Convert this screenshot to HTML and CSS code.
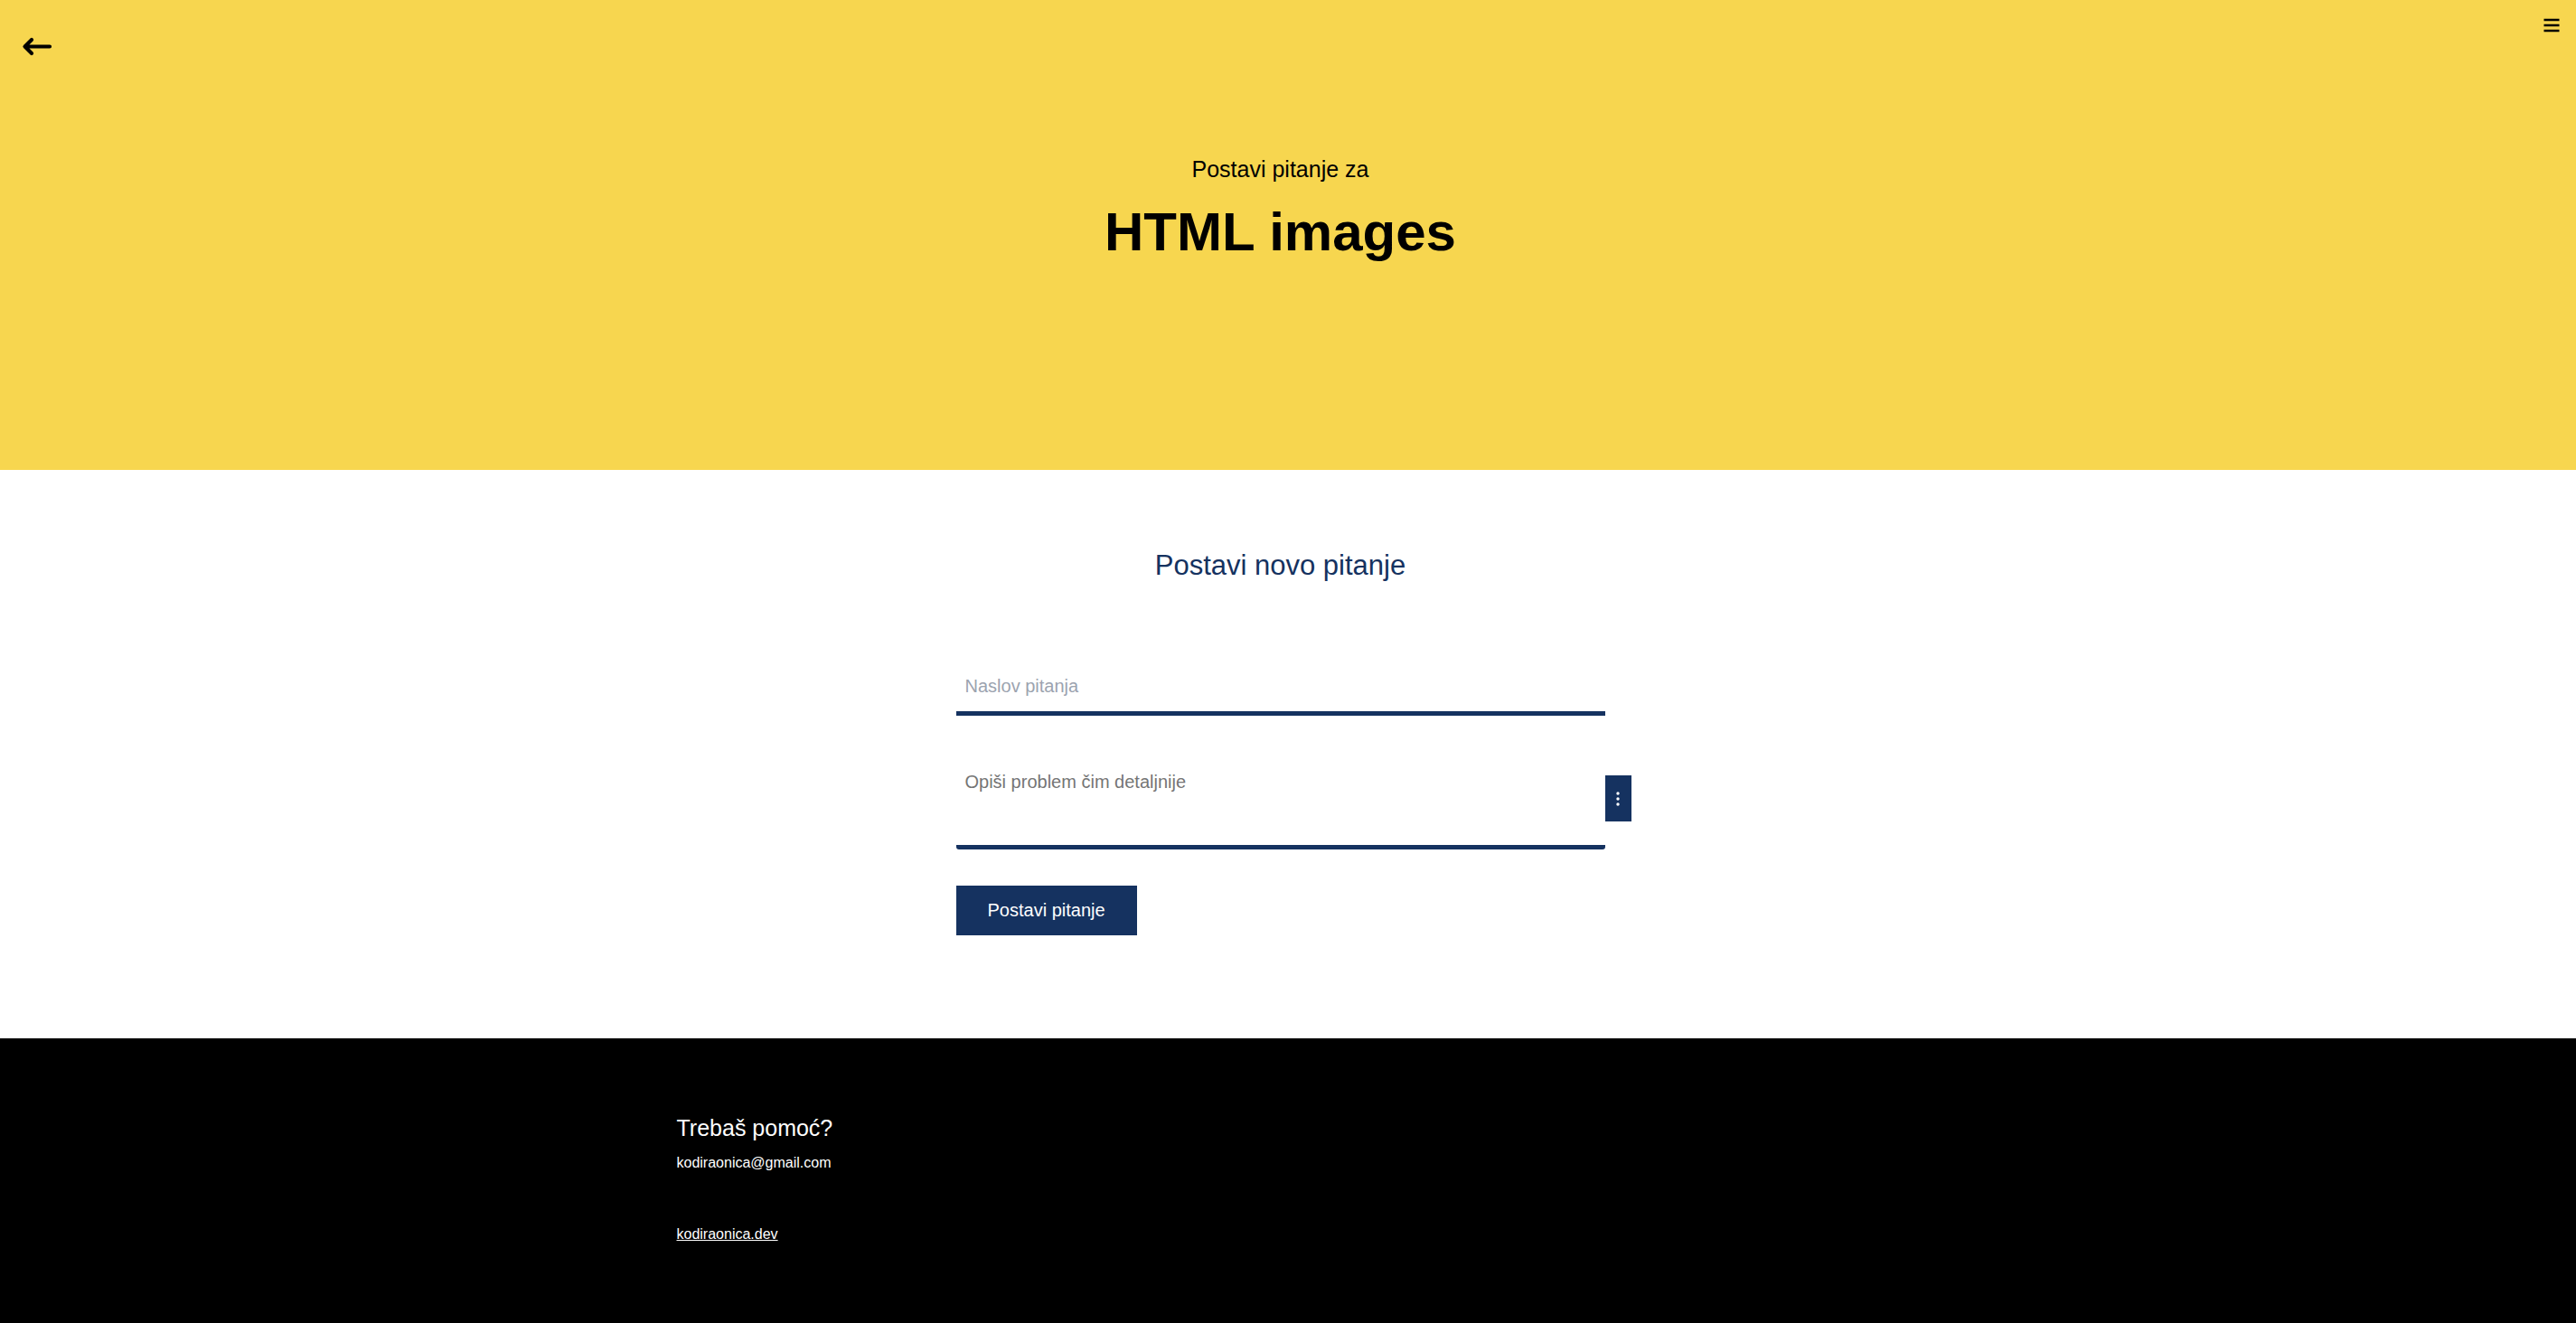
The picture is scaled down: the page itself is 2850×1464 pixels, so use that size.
FILE: index.html
```html
<!DOCTYPE html>
<html lang="hr">
<head>
<meta charset="utf-8">
<title>Postavi pitanje</title>
<link rel="stylesheet" href="styles.css">
</head>
<body>
<header class="hero">
  <a class="back" href="#" aria-label="Natrag">
    <svg width="34" height="24" viewBox="0 0 34 24"><path d="M31 10.5 H4 M11 3 L3.5 10.5 L11 18" fill="none" stroke="#000" stroke-width="4.2" stroke-linecap="round" stroke-linejoin="round"/></svg>
  </a>
  <button class="menu" aria-label="Izbornik">
    <svg width="18" height="16" viewBox="0 0 18 16"><path d="M0.5 2 H17.5 M0.5 8 H17.5 M0.5 14 H17.5" fill="none" stroke="#000" stroke-width="2.6"/></svg>
  </button>
  <p class="hero-sub">Postavi pitanje za</p>
  <h1 class="hero-title">HTML images</h1>
</header>

<main class="ask">
  <h2 class="ask-title">Postavi novo pitanje</h2>
  <form class="ask-form">
    <input class="field-title" type="text" placeholder="Naslov pitanja">
    <div class="area-row">
      <textarea class="field-body" placeholder="Opiši problem čim detaljnije"></textarea>
      <button type="button" class="more" aria-label="Više">
        <svg width="6" height="18" viewBox="0 0 6 18"><circle cx="3" cy="3" r="1.7" fill="#fff"/><circle cx="3" cy="9" r="1.7" fill="#fff"/><circle cx="3" cy="15" r="1.7" fill="#fff"/></svg>
      </button>
    </div>
    <button type="submit" class="submit">Postavi pitanje</button>
  </form>
</main>

<footer class="footer">
  <div class="footer-inner">
    <h3 class="footer-title">Trebaš pomoć?</h3>
    <p class="footer-mail">kodiraonica@gmail.com</p>
    <a class="footer-link" href="#">kodiraonica.dev</a>
  </div>
</footer>
</body>
</html>
```

FILE: styles.css
```css
* { box-sizing: border-box; }

html, body {
  margin: 0;
  padding: 0;
}

body {
  font-family: "Liberation Sans", Arial, Helvetica, sans-serif;
  color: #000;
  background: #fff;
}

.hero {
  position: relative;
  height: 520px;
  background: #f7d64f;
  padding: 172px 17px 0 0;
  text-align: center;
}

.back {
  position: absolute;
  left: 24px;
  top: 41px;
  display: block;
  line-height: 0;
}

.menu {
  position: absolute;
  right: 18px;
  top: 20px;
  padding: 0;
  border: 0;
  background: none;
  line-height: 0;
}

.hero-sub {
  margin: 0 0 20px;
  font-size: 25px;
  line-height: 30px;
  font-weight: 400;
}

.hero-title {
  margin: 0;
  font-size: 60px;
  line-height: 70px;
  font-weight: 700;
}

.ask {
  height: 629px;
  padding: 88px 17px 0 0;
  display: flex;
  flex-direction: column;
  align-items: center;
}

.ask-title {
  margin: 0;
  font-size: 31px;
  line-height: 36px;
  font-weight: 400;
  color: #153260;
}

.ask-form {
  width: 718px;
  margin-top: 92px;
  display: flex;
  flex-direction: column;
  align-items: flex-start;
}

.field-title,
.field-body {
  width: 718px;
  border: 0;
  border-bottom: 5px solid #153260;
  font-family: "Liberation Sans", Arial, sans-serif;
  font-size: 20px;
  line-height: 23px;
  color: #000;
  background: #fff;
  outline: none;
}

.field-title {
  height: 56px;
  padding: 12px 10px 16px;
}

.field-title::placeholder {
  color: #9ca3af;
}

.area-row {
  display: flex;
  align-items: flex-start;
  margin-top: 50px;
  margin-right: -29px;
}

.field-body {
  height: 98px;
  padding: 12px 10px;
  resize: none;
  border-bottom-left-radius: 3px;
  border-bottom-right-radius: 3px;
}

.field-body::placeholder {
  color: #757575;
}

.more {
  width: 29px;
  height: 51px;
  margin-top: 16px;
  padding: 0;
  border: 0;
  background: #153260;
  display: flex;
  align-items: center;
  justify-content: center;
}

.submit {
  margin-top: 40px;
  height: 55px;
  padding: 0 35px;
  border: 0;
  background: #153260;
  color: #fff;
  font-family: "Liberation Sans", Arial, sans-serif;
  font-size: 20px;
  line-height: 23px;
}

.footer {
  height: 315px;
  background: #000;
  color: #fff;
  padding: 84px 17px 0 0;
}

.footer-inner {
  width: 1336px;
  margin: 0 auto;
  display: flex;
  flex-direction: column;
  align-items: flex-start;
}

.footer-title {
  margin: 0;
  font-size: 25px;
  line-height: 30px;
  font-weight: 400;
}

.footer-mail {
  margin: 14px 0 0;
  font-size: 16px;
  line-height: 20px;
}

.footer-link {
  margin-top: 59px;
  font-size: 16px;
  line-height: 20px;
  color: #fff;
  text-decoration: underline;
}
```
